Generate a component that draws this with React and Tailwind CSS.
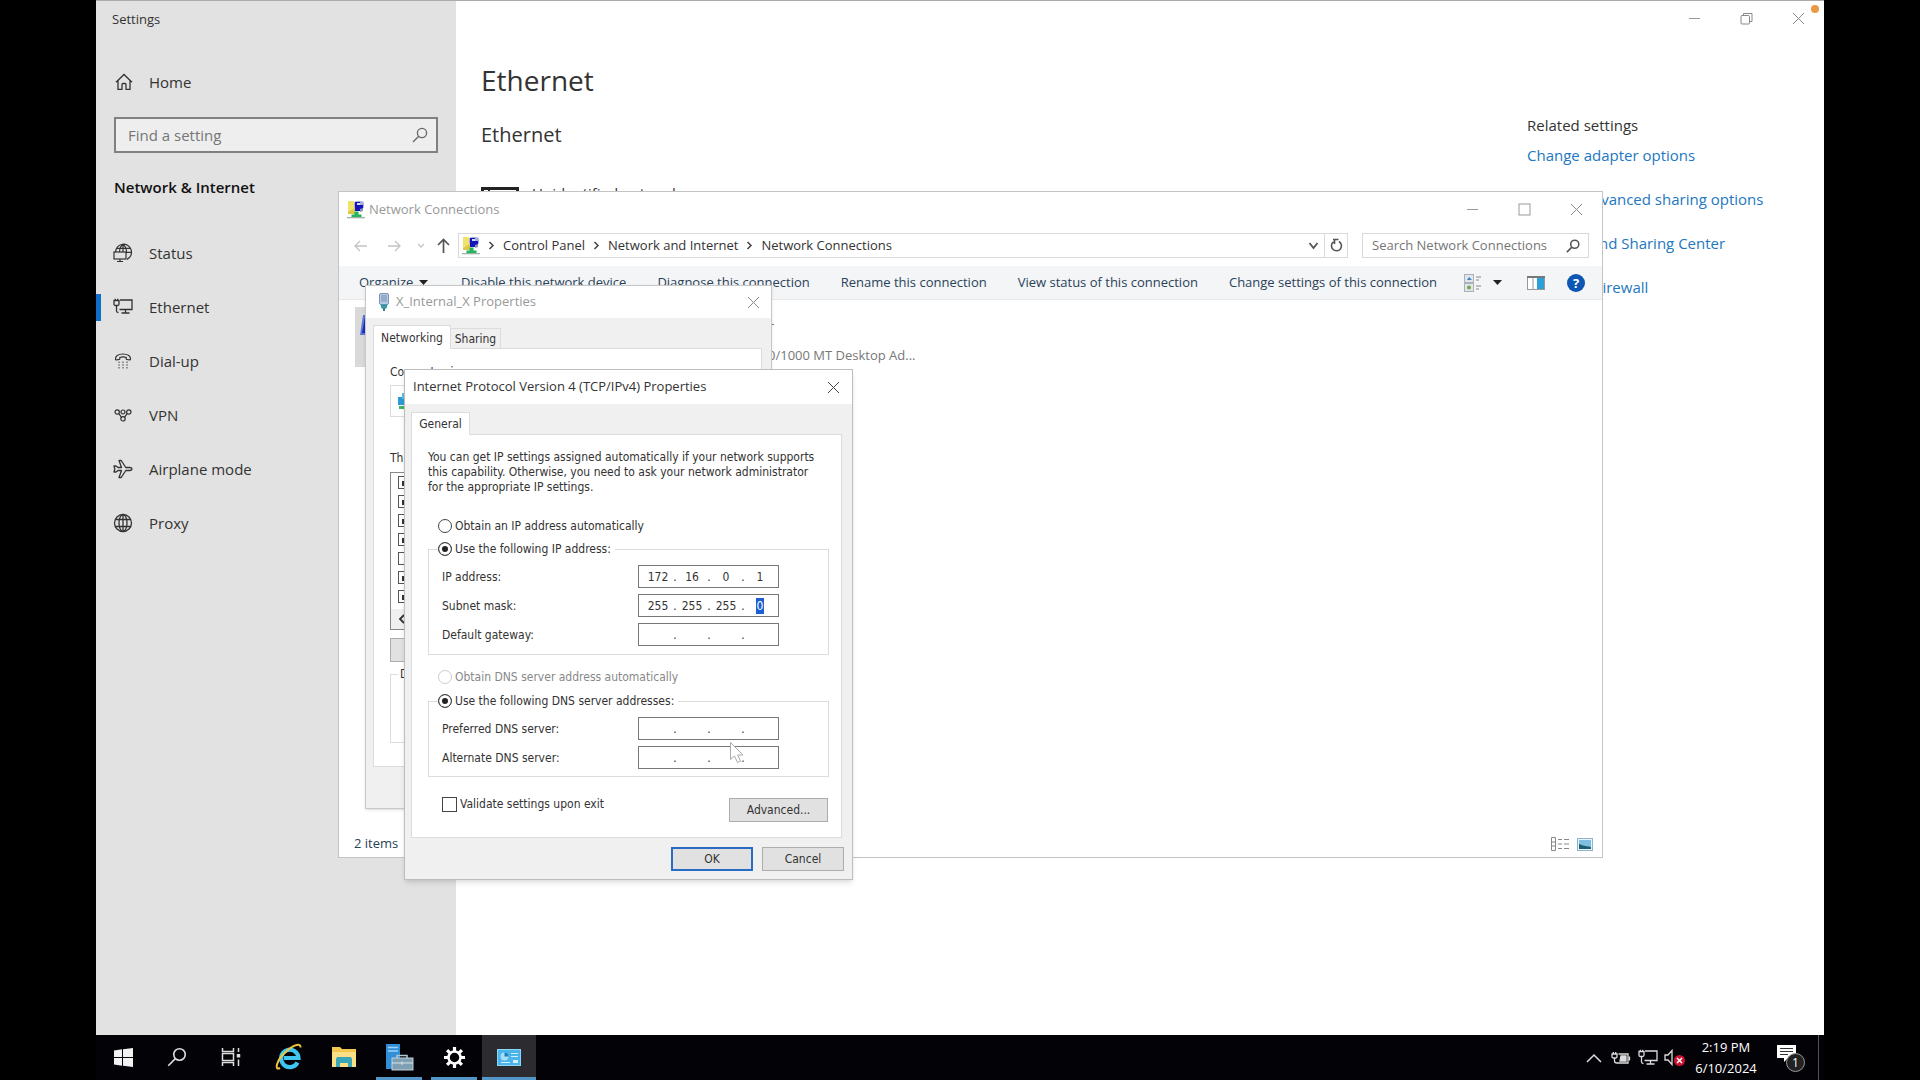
import React from 'react';

// ─── Data ────────────────────────────────────────────────────────
const navItems = [
  { label: 'Status', icon: StatusIcon },
  { label: 'Ethernet', icon: MonitorIcon, active: true },
  { label: 'Dial-up', icon: DialUpIcon },
  { label: 'VPN', icon: VpnIcon },
  { label: 'Airplane mode', icon: AirplaneIcon },
  { label: 'Proxy', icon: GlobeIcon },
];

const relatedLinks = [
  'Change adapter options',
  'Change advanced sharing options',
  'Network and Sharing Center',
  'Windows Firewall',
];

const crumbs = ['Control Panel', 'Network and Internet', 'Network Connections'];

const commands = [
  'Disable this network device',
  'Diagnose this connection',
  'Rename this connection',
  'View status of this connection',
  'Change settings of this connection',
];

const protocolItems = [true, true, true, true, false, true, true];

// ─── Sidebar icons ───────────────────────────────────────────────
function HomeIcon() {
  return (
    <svg width="18" height="18" viewBox="0 0 18 18" fill="none" stroke="#333" strokeWidth="1.3">
      <path d="M1 9.2 9 1.5l8 7.7M3 7.6V16.3h4V11.5q0-1 1-1h2q1 0 1 1v4.8h4V7.6" />
    </svg>
  );
}

function StatusIcon() {
  return (
    <svg width="20" height="20" viewBox="0 0 20 20" fill="none" stroke="#333" strokeWidth="1.2">
      <path d="M2.5 9A8 8 0 1 1 14 16.4M10 1.2C7.4 3 6.6 6 6.5 9M10 1.2c2.7 2.2 3.8 5.8 3.4 9M10 1.2V9M3.5 5.3h14M13 9.3h5.5" />
      <rect x="1" y="9" width="12" height="7" />
      <path d="M7 16v2.5M4 18.5h6" />
    </svg>
  );
}

function MonitorIcon({ color = '#333' }) {
  return (
    <svg width="20" height="18" viewBox="0 0 20 18" fill="none" stroke={color} strokeWidth="1.3">
      <path d="M7 2h12v9.5H6.5M12.500 11.5v3.5M8.500 15h8" />
      <path d="M1 2.500h5V6q0 1.500-1.500 1.500h-2Q1 7.500 1 6zM2.300.8v1.700M4.700.8v1.700M3.500 7.500v5.500q0 1.500 2 1.500" />
    </svg>
  );
}

function DialUpIcon() {
  return (
    <svg width="18" height="18" viewBox="0 0 18 18" fill="none" stroke="#333" strokeWidth="1.2">
      <path d="M1.500 7.300C1 4.500 4 2 9 2s8 2.500 7.500 5.300q-.2.700-.9.600l-2.700-.4q-.7-.1-.7-.8V5.500Q9 4.300 5.800 5.500v1.200q0 .7-.7.800l-2.700.4q-.7.100-.9-.6z" />
      <path d="M5 9.500v7M9 9.500v7M13 9.500v7" stroke="#777" strokeWidth="1.5" strokeDasharray="1.5 1.3" />
    </svg>
  );
}

function VpnIcon() {
  return (
    <svg width="18" height="14" viewBox="0 0 18 14" fill="none" stroke="#333" strokeWidth="1.2">
      <circle cx="3.2" cy="4" r="2.2" />
      <circle cx="9" cy="4" r="2" />
      <circle cx="14.8" cy="4" r="2.2" />
      <circle cx="9" cy="10.8" r="2.2" />
      <path d="M4.8 5.6 7.4 9.2M13.2 5.6l-2.6 3.6" />
    </svg>
  );
}

function AirplaneIcon() {
  return (
    <svg width="20" height="20" viewBox="0 0 20 20" fill="none" stroke="#333" strokeWidth="1.3" strokeLinejoin="round">
      <path d="M1 7h2l2 1.5h3.5L6 1.5h2.2l4.6 7h4.2q2 .3 2 1.5t-2 1.500h-4.200l-4.600 7H6l2.500-7H5L3 13H1l.8-3z" />
    </svg>
  );
}

function GlobeIcon() {
  return (
    <svg width="20" height="20" viewBox="0 0 20 20" fill="none" stroke="#333" strokeWidth="1.3">
      <circle cx="10" cy="10" r="8.5" />
      <ellipse cx="10" cy="10" rx="4" ry="8.5" />
      <path d="M2.5 6.5h15M2.5 13.5h15M10 1.5v17" />
    </svg>
  );
}

function SearchIcon({ size = 16, color = '#666', width = 1.3 }) {
  return (
    <svg width={size} height={size} viewBox="0 0 16 16" fill="none" stroke={color} strokeWidth={width}>
      <circle cx="10" cy="6" r="4.6" />
      <path d="M6.7 9.3 1 15" />
    </svg>
  );
}

// ─── Window caption glyphs ───────────────────────────────────────
function MinimizeGlyph() {
  return (
    <svg width="13" height="13" viewBox="0 0 13 13" stroke="#999" fill="none">
      <path d="M1 6.5h11" />
    </svg>
  );
}

function MaximizeGlyph() {
  return (
    <svg width="13" height="13" viewBox="0 0 13 13" stroke="#999" fill="none">
      <rect x="1" y="1" width="11" height="11" />
    </svg>
  );
}

function RestoreGlyph() {
  return (
    <svg width="13" height="13" viewBox="0 0 13 13" stroke="#888" fill="none">
      <rect x="1" y="3.5" width="8.5" height="8.5" rx="1" />
      <path d="M3.5 3.5V1.5h8.5v8H9.5" />
    </svg>
  );
}

function CloseGlyph({ color = '#888' }) {
  return (
    <svg width="13" height="13" viewBox="0 0 13 13" stroke={color} fill="none">
      <path d="M1 1l11 11M12 1 1 12" />
    </svg>
  );
}

function NetworkFolderIcon() {
  return (
    <svg width="18" height="19" viewBox="0 0 18 19">
      <path d="M1 1h5l2 1v12H1z" fill="#f1e36a" />
      <path d="M1 14h7V8L1 12z" fill="#dcc84a" />
      <rect x="7" y="1" width="10" height="8" rx="3" fill="#a9addc" />
      <path d="M8 2h5v3h3v4h-3v2H8z" fill="#1414b8" />
      <path d="M10 3h3v2h-3z" fill="#d7dcff" />
      <path d="M13 9l3-1v3l-3 1z" fill="#8f93b5" />
      <path d="M7.500 11.500h4v3h3v3h-10v-3h3z" fill="#23b45c" />
      <path d="M0 17h18v1.300H0z" fill="#9eb3a8" />
    </svg>
  );
}

function AdapterIcon() {
  return (
    <svg width="12" height="18" viewBox="0 0 12 18">
      <rect x="1.5" y="0.5" width="9" height="11" rx="1.5" fill="#b9cbe4" stroke="#7d93b5" />
      <path d="M4 2v7M6 2v7M8 2v7" stroke="#7690b8" />
      <path d="M2.5 11.5h7l-1 4h-5z" fill="#2f9aa0" />
      <path d="M5 15h2v3H5z" fill="#3a7f86" />
    </svg>
  );
}

// ─── Shared dialog parts ─────────────────────────────────────────
const CaptionButton = ({ label, children }) => (
  <button type="button" aria-label={label} className="flex w-[52px] items-center justify-center">
    {children}
  </button>
);

const Radio = ({ name, label, checked = false, disabled = false }) => (
  <label className={`flex h-4 items-center gap-[3px] ${disabled ? 'text-[#888]' : 'text-[#333]'}`}>
    <input
      type="radio"
      name={name}
      defaultChecked={checked}
      disabled={disabled}
      className="size-[14px] shrink-0 appearance-none rounded-full border border-[#444] bg-white checked:bg-[#222] checked:shadow-[inset_0_0_0_3px_#fff] disabled:border-[#ccc]"
    />
    {label}
  </label>
);

const AddressRow = ({ label, octets, selected }) => (
  <div role="group" aria-label={label} className="flex h-[23px] items-center">
    <span className="w-[196px]">{label}</span>
    <div className="flex h-[23px] w-[141px] items-center border border-[#777] bg-white pl-1">
      {octets.map((value, i) => (
        <React.Fragment key={i}>
          {i > 0 && <span className="w-1 text-center">.</span>}
          <span className="flex w-[30px] justify-center">
            <input
              type="text"
              aria-label={`${label} octet ${i + 1}`}
              defaultValue={value}
              className={
                selected === i
                  ? 'h-4 w-2 bg-[#1b5fd0] text-center text-white outline-none'
                  : 'h-4 w-[28px] bg-transparent text-center outline-none'
              }
            />
          </span>
        </React.Fragment>
      ))}
    </div>
  </div>
);

// ─── Settings app ────────────────────────────────────────────────
const Sidebar = () => (
  <aside className="flex w-[360px] shrink-0 flex-col bg-[#e2e2e2] text-[15px] text-[#333]">
    <div className="h-[37px] pl-4 text-[13px] leading-9">Settings</div>
    <a href="#home" className="mt-[22px] flex h-11 items-center gap-4 pl-[19px]">
      <HomeIcon />
      Home
    </a>
    <div className="mx-[18px] mt-[13px] flex h-9 items-center border-2 border-[#808080] bg-[#eee] pr-2 pl-3">
      <input
        type="text"
        aria-label="Find a setting"
        placeholder="Find a setting"
        className="min-w-0 flex-1 bg-transparent outline-none placeholder:text-[#767676]"
      />
      <SearchIcon />
    </div>
    <h2 className="mt-[21px] pl-[18px] text-[15px] leading-[26px] font-semibold text-[#111]">Network &amp; Internet</h2>
    <nav className="mt-[26px] flex flex-col">
      {navItems.map(({ label, icon: Icon, active }) => (
        <a key={label} href={`#${label}`} className="flex h-[54px] items-center">
          <span className={`h-[27px] w-[5px] ${active ? 'bg-[#0f6cc9]' : ''}`} />
          <span className="ml-[12px] flex w-[20px] justify-center">
            <Icon />
          </span>
          <span className="ml-4">{label}</span>
        </a>
      ))}
    </nav>
  </aside>
);

const SettingsWindow = () => (
  <div className="flex min-h-0 flex-1 border-t border-[#aaa] bg-white">
    <Sidebar />
    <main className="flex flex-1 flex-col">
      <div className="relative flex h-[34px] justify-end">
        <CaptionButton label="Minimize Settings"><MinimizeGlyph /></CaptionButton>
        <CaptionButton label="Restore Settings"><RestoreGlyph /></CaptionButton>
        <CaptionButton label="Close Settings"><CloseGlyph /></CaptionButton>
        <span className="absolute top-1 right-[5px] size-2 rounded-full bg-[#e99a45]" />
      </div>
      <div className="flex justify-between pr-[60px] pl-[25px]">
        <div className="pt-[23px]">
          <h1 className="text-[28px] leading-[44px] text-[#333]">Ethernet</h1>
          <h2 className="mt-[17px] text-[20px] leading-8 text-[#333]">Ethernet</h2>
          <div className="mt-[36px] flex gap-[13px] text-[15px] leading-5 text-[#333]">
            <span className="flex h-[26px] w-[38px] border-3 border-[#222]">
              <span className="w-[6px] border-r-2 border-[#222]" />
            </span>
            <span className="-mt-1">Unidentified network</span>
          </div>
        </div>
        <aside className="w-[237px] pt-[79px] text-[15px]">
          <h3 className="leading-[22px] text-[#333]">Related settings</h3>
          <ul className="mt-2 flex flex-col gap-[22px] whitespace-nowrap text-[#2377c0]">
            {relatedLinks.map((link) => (
              <li key={link} className="leading-[22px]">
                <a href="#related">{link}</a>
              </li>
            ))}
          </ul>
        </aside>
      </div>
    </main>
  </div>
);

// ─── Network Connections window ──────────────────────────────────
const NetworkConnections = () => (
  <section className="absolute top-[191px] left-[242px] flex h-[667px] w-[1265px] flex-col border border-[#c4c4c4] bg-white text-[13px] text-[#333]">
    <header className="flex h-[35px] items-center pl-2">
      <NetworkFolderIcon />
      <h2 className="ml-1 flex-1 text-[#999]">Network Connections</h2>
      <CaptionButton label="Minimize"><MinimizeGlyph /></CaptionButton>
      <CaptionButton label="Maximize"><MaximizeGlyph /></CaptionButton>
      <CaptionButton label="Close"><CloseGlyph /></CaptionButton>
    </header>

    <div className="mt-[6px] flex h-[25px] shrink-0 items-stretch pr-[13px] pl-[15px]">
      <div className="flex w-[104px] shrink-0 items-center">
        <button type="button" aria-label="Back">
          <svg width="14" height="12" viewBox="0 0 14 12" fill="none" stroke="#c4c4c4" strokeWidth="1.3"><path d="M13 6H1M6 1 1 6l5 5" /></svg>
        </button>
        <button type="button" aria-label="Forward" className="ml-[19px]">
          <svg width="14" height="12" viewBox="0 0 14 12" fill="none" stroke="#c4c4c4" strokeWidth="1.3"><path d="M1 6h12M8 1l5 5-5 5" /></svg>
        </button>
        <button type="button" aria-label="Recent locations" className="ml-4">
          <svg width="8" height="6" viewBox="0 0 8 6" fill="none" stroke="#c4c4c4" strokeWidth="1.3"><path d="M1 1l3 3 3-3" /></svg>
        </button>
        <button type="button" aria-label="Up" className="ml-3">
          <svg width="13" height="15" viewBox="0 0 13 15" fill="none" stroke="#555" strokeWidth="1.7"><path d="M6.5 15V1.5M1 7l5.5-5.5L12 7" /></svg>
        </button>
      </div>
      <div className="flex flex-1 border border-[#d9d9d9]">
        <div className="flex flex-1 items-center pl-[3px]">
          <NetworkFolderIcon />
          {crumbs.map((crumb) => (
            <React.Fragment key={crumb}>
              <svg className="mx-2" width="7" height="9" viewBox="0 0 7 9" fill="none" stroke="#444" strokeWidth="1.5"><path d="M1.5 1 5 4.5 1.5 8" /></svg>
              <a href="#crumb">{crumb}</a>
            </React.Fragment>
          ))}
        </div>
        <button type="button" aria-label="Previous locations" className="flex w-[22px] items-center justify-center">
          <svg width="11" height="8" viewBox="0 0 11 8" fill="none" stroke="#555" strokeWidth="1.8"><path d="M1.5 1l4 5 4-5" /></svg>
        </button>
        <button type="button" aria-label="Refresh" className="flex w-[23px] items-center justify-center border-l border-[#d9d9d9]">
          <svg width="13" height="15" viewBox="0 0 13 15" fill="none" stroke="#555" strokeWidth="1.6"><path d="M9 3.5a5 5 0 1 1-5.5.3M3 1.5h5.5M4.5 1v5" /></svg>
        </button>
      </div>
      <div className="ml-[14px] flex w-[227px] items-center border border-[#d9d9d9] pr-2 pl-[9px]">
        <input
          type="search"
          aria-label="Search Network Connections"
          placeholder="Search Network Connections"
          className="min-w-0 flex-1 outline-none placeholder:text-[#757575]"
        />
        <SearchIcon size={14} color="#555" width={1.8} />
      </div>
    </div>

    <div className="mt-2 flex h-[34px] shrink-0 items-center border-b border-[#e6e8ea] bg-[#f3f5f7] pl-5 text-[#2b4257]">
      <button type="button" className="flex w-[102px] items-center gap-[6px]">
        Organize
        <svg width="9" height="5" viewBox="0 0 9 5"><path d="M0 0h9L4.5 5z" fill="#222" /></svg>
      </button>
      <div className="flex gap-[31px]">
        {commands.map((command) => (
          <button key={command} type="button" className="whitespace-nowrap">{command}</button>
        ))}
      </div>
      <div className="ml-auto flex items-center pr-[17px]">
        <button type="button" aria-label="Change your view">
          <svg width="18" height="18" viewBox="0 0 18 18">
            <rect x="0.5" y="0.5" width="9" height="8" fill="#dfe7ec" stroke="#aab2b8" />
            <rect x="0.5" y="9.5" width="9" height="8" fill="#dfe7ec" stroke="#aab2b8" />
            <path d="M3 6l2-3 3 3z" fill="#3a86c8" />
            <circle cx="5" cy="13.5" r="2" fill="#7ba54a" />
            <path d="M12 3h5M12 6h3M12 12h5M12 15h3" stroke="#888" />
          </svg>
        </button>
        <button type="button" aria-label="More view options" className="ml-[11px]">
          <svg width="9" height="5" viewBox="0 0 9 5"><path d="M0 0h9L4.5 5z" fill="#222" /></svg>
        </button>
        <button type="button" aria-label="Show the preview pane" className="ml-[25px]">
          <svg width="18" height="14" viewBox="0 0 18 14">
            <rect x="0.5" y="0.5" width="17" height="13" fill="#fff" stroke="#999" />
            <path d="M0 1h18" stroke="#777" strokeWidth="2" />
            <path d="M6 2v11" stroke="#999" />
            <rect x="10" y="2" width="7" height="11" fill="#2c9fd6" />
          </svg>
        </button>
        <button
          type="button"
          aria-label="Get help"
          className="ml-[22px] size-[18px] rounded-full bg-[#0d56b3] text-center text-[13px] leading-[18px] font-bold text-white"
        >
          ?
        </button>
      </div>
    </div>

    <div className="flex flex-1 pt-[7px] pl-4">
      <div className="h-[60px] w-[300px] bg-[#d9d9d9] pt-2 pl-[5px]">
        <svg width="28" height="22" viewBox="0 0 28 22">
          <path d="M3 0h22v20H0z" fill="#5b78d8" />
          <path d="M5 2h20v16H2z" fill="#1830b8" />
        </svg>
      </div>
      <div className="pl-[113px] leading-8 text-[#777]">
        <div>–</div>
        <div>0/1000 MT Desktop Ad...</div>
      </div>
    </div>

    <footer className="flex h-[26px] items-center pr-[9px] pl-[15px] text-[#2b4257]">
      <span className="flex-1">2 items</span>
      <button type="button" aria-label="Details view">
        <svg width="19" height="14" viewBox="0 0 19 14" fill="none" stroke="#888">
          <path d="M.5.5h4v13h-4zM.5 5h4M.5 9h4" />
          <path d="M7 2.5h4M13 2.5h5M7 7h4M13 7h5M7 11.5h4M13 11.5h5" />
        </svg>
      </button>
      <button type="button" aria-label="Large icons view" className="ml-[7px]">
        <svg width="16" height="13" viewBox="0 0 16 13">
          <rect x="0.5" y="0.5" width="15" height="12" fill="#e8f2f8" stroke="#8ab4cf" />
          <rect x="2" y="2" width="12" height="9" fill="#7fc0e0" />
          <path d="M2 11V6l4 1.5L14 9v2z" fill="#1b5f73" />
        </svg>
      </button>
    </footer>
  </section>
);

// ─── Adapter properties dialog ───────────────────────────────────
const AdapterProperties = () => (
  <section className="absolute top-[285px] left-[269px] w-[407px] border border-[#c8c8c8] bg-[#f0f0f0] font-['DejaVu_Sans_Condensed','DejaVu_Sans',sans-serif] text-[12px] text-[#333] shadow-sm">
    <header className="flex h-[32px] items-center bg-white pl-3 font-['Open_Sans','Noto_Sans',sans-serif] text-[13px]">
      <AdapterIcon />
      <h2 className="ml-[6px] flex-1 text-[#999]">X_Internal_X Properties</h2>
      <button type="button" aria-label="Close adapter properties" className="flex w-9 justify-center">
        <CloseGlyph />
      </button>
    </header>
    <div className="pt-[7px] pr-[9px] pb-[41px] pl-[7px]">
      <div role="tablist" className="flex items-end">
        <button type="button" role="tab" aria-selected="true" className="z-10 -mb-px h-6 w-[78px] border border-b-0 border-[#dcdcdc] bg-white">
          Networking
        </button>
        <button type="button" role="tab" aria-selected="false" className="h-5 w-[50px] border border-b-0 border-l-0 border-[#dcdcdc]">
          Sharing
        </button>
      </div>
      <div className="h-[419px] border border-[#dcdcdc] bg-white pt-[15px] pr-4 pl-4">
        <p className="h-4 leading-4">Connect using:</p>
        <div className="mt-[5px] flex h-8 items-center border border-[#dcdcdc] pl-[6px]">
          <svg width="16" height="18" viewBox="0 0 16 18">
            <path d="M1 5h14v8H1z" fill="#2d9bd8" />
            <path d="M5 1h10v6H5z" fill="#5cc0ea" />
            <path d="M2 14h13v3H2z" fill="#3fb56a" />
          </svg>
        </div>
        <p className="mt-[33px] h-4 leading-4">This connection uses the following items:</p>
        <div className="mt-[6px] flex h-[158px] flex-col border border-[#888]">
          {protocolItems.map((checked, i) => (
            <label key={i} className="flex h-[19px] items-center pl-[7px]">
              <input
                type="checkbox"
                aria-label={`Item ${i + 1}`}
                defaultChecked={checked}
                className="size-[13px] appearance-none border border-[#555] bg-white checked:bg-[#333] checked:shadow-[inset_0_1px_0_3px_#fff]"
              />
            </label>
          ))}
          <div className="mt-auto flex h-[20px] items-center bg-[#f0f0f0] pl-[7px]">
            <svg width="7" height="10" viewBox="0 0 7 10" fill="none" stroke="#333" strokeWidth="1.8"><path d="M6 1 2 5l4 4" /></svg>
          </div>
        </div>
        <button type="button" aria-label="Install" className="mt-2 block h-6 w-[110px] border border-[#adadad] bg-[#e1e1e1]" />
        <fieldset className="mt-1 h-[77px] border border-[#dcdcdc] pl-[7px]">
          <legend className="h-4 px-[2px] leading-4">Description</legend>
        </fieldset>
      </div>
    </div>
  </section>
);

// ─── TCP/IPv4 properties dialog ──────────────────────────────────
const Ipv4Properties = () => (
  <section className="absolute top-[369px] left-[308px] w-[449px] border border-[#bdbdbd] bg-[#f0f0f0] font-['DejaVu_Sans_Condensed','DejaVu_Sans',sans-serif] text-[12px] text-[#333] shadow-md">
    <header className="flex h-[34px] items-center bg-white pl-2 font-['Open_Sans','Noto_Sans',sans-serif] text-[13px]">
      <h2 className="flex-1">Internet Protocol Version 4 (TCP/IPv4) Properties</h2>
      <button type="button" aria-label="Close TCP/IPv4 properties" className="flex w-[38px] justify-center">
        <CloseGlyph color="#444" />
      </button>
    </header>
    <div className="px-[6px] pt-2">
      <div role="tablist" className="flex">
        <button type="button" role="tab" aria-selected="true" className="z-10 -mb-px h-[23px] w-[59px] border border-b-0 border-[#dcdcdc] bg-white">
          General
        </button>
      </div>
      <form className="mr-1 border border-[#dcdcdc] bg-white px-4 pt-[15px] pb-[15px]">
        <p className="leading-[15px]">
          You can get IP settings assigned automatically if your network supports
          <br />
          this capability. Otherwise, you need to ask your network administrator
          <br />
          for the appropriate IP settings.
        </p>
        <div className="mt-[23px] pl-[10px]">
          <Radio name="ip" label="Obtain an IP address automatically" />
        </div>
        <fieldset className="mt-[7px] mr-[-4px] border border-[#dcdcdc] px-[9px] pb-2">
          <legend className="pr-1">
            <Radio name="ip" label="Use the following IP address:" checked />
          </legend>
          <div className="mt-2 flex flex-col gap-[6px] pl-1">
            <AddressRow label="IP address:" octets={['172', '16', '0', '1']} />
            <AddressRow label="Subnet mask:" octets={['255', '255', '255', '0']} selected={3} />
            <AddressRow label="Default gateway:" octets={['', '', '', '']} />
          </div>
        </fieldset>
        <div className="mt-[14px] pl-[10px]">
          <Radio name="dns-auto" label="Obtain DNS server address automatically" disabled />
        </div>
        <fieldset className="mt-2 mr-[-4px] border border-[#dcdcdc] px-[9px] pb-[7px]">
          <legend className="pr-1">
            <Radio name="dns" label="Use the following DNS server addresses:" checked />
          </legend>
          <div className="mt-2 flex flex-col gap-[6px] pl-1">
            <AddressRow label="Preferred DNS server:" octets={['', '', '', '']} />
            <AddressRow label="Alternate DNS server:" octets={['', '', '', '']} />
          </div>
        </fieldset>
        <div className="mt-[19px] flex items-start justify-between pl-[14px]">
          <label className="flex h-4 items-center gap-[3px]">
            <input type="checkbox" className="size-[15px] appearance-none border border-[#444] bg-white" />
            Validate settings upon exit
          </label>
          <button type="button" className="mt-[2px] mr-[-3px] h-6 w-[99px] border border-[#adadad] bg-[#e1e1e1]">Advanced...</button>
        </div>
      </form>
    </div>
    <footer className="flex justify-end gap-[9px] pt-[9px] pr-2 pb-2">
      <button type="button" className="h-6 w-[82px] border-2 border-[#2a6cc4] bg-[#e1e1e1]">OK</button>
      <button type="button" className="h-6 w-[82px] border border-[#adadad] bg-[#e1e1e1]">Cancel</button>
    </footer>
  </section>
);

const Cursor = () => (
  <svg className="absolute top-[741px] left-[633px]" width="17" height="24" viewBox="0 0 17 24">
    <path d="M1.5 1.5v17l4-3.5 3 6.5 3-1.3-2.8-6.2h5.3z" fill="#fff" stroke="#aaa" />
  </svg>
);

// ─── Taskbar ─────────────────────────────────────────────────────
const TaskButton = ({ label, running, active, children }) => (
  <button
    type="button"
    aria-label={label}
    className={`flex w-[54px] flex-col items-center ${active ? 'bg-[#2c2c30]' : ''}`}
  >
    <span className="flex flex-1 items-center pt-[2px]">{children}</span>
    <span className={`h-[3px] ${active ? 'w-full' : 'w-[46px]'} ${running || active ? 'bg-[#5596c8]' : ''}`} />
  </button>
);

const Taskbar = () => (
  <footer className="flex h-[45px] shrink-0 bg-[#020207] text-white">
    <TaskButton label="Start">
      <svg width="19" height="19" viewBox="0 0 19 19" fill="#f2f2f2">
        <path d="M0 2.500 8 1.300V9H0zM9 1.200 19 0v9H9zM0 10h8v7.700L0 16.500zM9 10h10v9L9 17.800z" />
      </svg>
    </TaskButton>
    <TaskButton label="Search">
      <SearchIcon size={20} color="#ddd" width={1.3} />
    </TaskButton>
    <TaskButton label="Task View">
      <svg width="20" height="18" viewBox="0 0 20 18" fill="none" stroke="#ddd" strokeWidth="1.5">
        <path d="M1.5 0v3.5h11V0M1.5 18v-3.5h11V18" />
        <rect x="1.5" y="5.5" width="11" height="7" />
        <path d="M17.5 0v4M17.5 11.5V18" />
        <path d="M17.5 6v3.5" strokeWidth="3.5" />
      </svg>
    </TaskButton>
    <div className="ml-1 flex gap-px">
      <TaskButton label="Internet Explorer">
        <svg width="28" height="28" viewBox="0 0 28 28" fill="none">
          <path d="M22.500 19.500A8.700 8.700 0 1 1 23.500 15H9" stroke="#3fc6f2" strokeWidth="4.2" />
          <path d="M5 25C-1 28 1.500 18 9 10.500S26-1.500 25.500 4.500" stroke="#efc53a" strokeWidth="2" />
        </svg>
      </TaskButton>
      <TaskButton label="File Explorer">
        <svg width="26" height="22" viewBox="0 0 26 22">
          <path d="M1 1h8l2 2h14v18H1z" fill="#f3c64c" />
          <path d="M1 6h24v15H1z" fill="#fbdf87" />
          <path d="M5 21v-8q0-2 2-2h12q2 0 2 2v8h-4v-4H9v4z" fill="#3aa6b8" />
        </svg>
      </TaskButton>
      <TaskButton label="Server Manager" running>
        <svg width="29" height="27" viewBox="0 0 29 27">
          <path d="M1 0h14v25H1z" fill="#2f8fd8" />
          <path d="M3 3.5h10M3 7h10" stroke="#9ed2f5" strokeWidth="1.3" />
          <path d="M12 14V11.5h10V14" fill="none" stroke="#b4c6d2" strokeWidth="1.5" />
          <rect x="7" y="14" width="21" height="12" fill="#7f9fb3" stroke="#c2d2dc" />
          <path d="M7 19h21M17 17.5v3.5" stroke="#d8e4ea" />
        </svg>
      </TaskButton>
      <TaskButton label="Settings" running>
        <svg width="21" height="21" viewBox="0 0 21 21" fill="none" stroke="#fff">
          <circle cx="10.5" cy="10.5" r="6" strokeWidth="2.5" />
          <path
            d="M10.5 0v4M10.5 17v4M0 10.5h4M17 10.5h4M3.1 3.1l2.8 2.8M15.1 15.1l2.8 2.8M3.1 17.9l2.8-2.8M15.1 5.9l2.8-2.8"
            strokeWidth="3.2"
          />
        </svg>
      </TaskButton>
      <TaskButton label="Control Panel" active>
        <svg width="24" height="17" viewBox="0 0 24 17">
          <rect x="0.5" y="0.5" width="23" height="16" fill="#4bb4ea" stroke="#8ed4f5" />
          <circle cx="7.5" cy="7.5" r="4" fill="#a5def8" />
          <path d="M7.5 7.5v-4a4 4 0 0 1 4 4z" fill="#1d7fc0" />
          <path d="M14 4.5h7M14 7.5h7M4 13.5h9" stroke="#d4f0fd" />
          <rect x="16" y="11" width="5" height="3" fill="#d4f0fd" />
        </svg>
      </TaskButton>
    </div>

    <div className="ml-auto flex items-center">
      <button type="button" aria-label="Show hidden icons">
        <svg width="16" height="10" viewBox="0 0 16 10" fill="none" stroke="#ddd" strokeWidth="1.5"><path d="M1 9l7-7 7 7" /></svg>
      </button>
      <svg className="ml-[9px]" width="20" height="14" viewBox="0 0 20 14" fill="none" stroke="#ddd" strokeWidth="1.3">
        <path d="M7.5 3H17v9H6M18.5 5.5v4" />
        <path d="M10 5h5v5H9z" fill="#ddd" />
        <path d="M1 3h5v2.5q0 1.5-1.5 1.5h-2Q1 7 1 5.5zM2.3 1v2M4.700 1v2M3.500 7v3q0 2 2.500 2" />
      </svg>
      <span className="ml-[7px]"><MonitorIcon color="#ddd" /></span>
      <svg className="ml-[6px]" width="22" height="18" viewBox="0 0 22 18" fill="none">
        <path d="M1 6h3l4-4.500v14L4 11H1z" stroke="#ddd" strokeWidth="1.3" />
        <circle cx="15.5" cy="11.5" r="5.5" fill="#d01030" />
        <path d="M13 9l5 5M18 9l-5 5" stroke="#fff" strokeWidth="1.5" />
      </svg>
      <div className="ml-2 w-[64px] text-center text-[13px] leading-[21px]">
        <div>2:19 PM</div>
        <div>6/10/2024</div>
      </div>
      <button type="button" aria-label="Notifications" className="relative ml-[19px] flex h-7 w-[28px] items-start">
        <svg width="20" height="20" viewBox="0 0 20 20">
          <path d="M0 1h19v13H11l-4 4v-4H0z" fill="#fff" />
          <path d="M3 4.5h13M3 7.5h13M3 10.5h8" stroke="#333" />
        </svg>
        <span className="absolute right-0 bottom-0 size-[19px] rounded-full border border-[#999] bg-[#222] text-center text-[12px] leading-[17px]">1</span>
      </button>
      <span className="ml-[13px] h-[45px] w-[6px] border-l border-[#555]" />
    </div>
  </footer>
);

export default function App() {
  return (
    <div className="h-screen overflow-hidden bg-black px-24 font-['Open_Sans','Noto_Sans',sans-serif]">
      <div className="relative flex h-full flex-col overflow-hidden">
        <SettingsWindow />
        <NetworkConnections />
        <AdapterProperties />
        <Ipv4Properties />
        <Cursor />
        <Taskbar />
      </div>
    </div>
  );
}
